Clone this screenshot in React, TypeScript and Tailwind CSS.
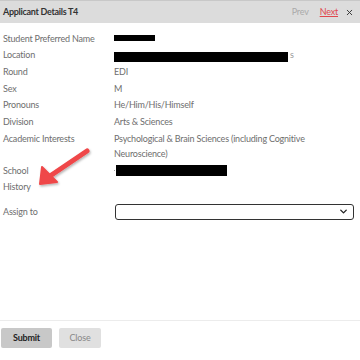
import { ChevronDown, X } from "lucide-react";

type Row = { label: string; value?: string; bar?: number; tail?: string };

const rows: Row[] = [
    { label: "Student Preferred Name", bar: 41 },
    { label: "Location", bar: 174, tail: "s" },
    { label: "Round", value: "EDI" },
    { label: "Sex", value: "M" },
    { label: "Pronouns", value: "He/Him/His/Himself" },
    { label: "Division", value: "Arts & Sciences" },
];

function Bar({ width, height }: { width: number; height: number }) {
    return <span className="inline-block bg-black" style={{ width, height }} />;
}

export default function App() {
    return (
        <div
            className="relative flex flex-col w-[360px] h-[360px] bg-white text-[#6e6e6e] text-[9px] tracking-[-0.2px] overflow-hidden"
            style={{ fontFamily: "'Source Sans Pro', Lato, 'Noto Sans', sans-serif" }}
        >
            <div className="flex items-center h-[23px] bg-[#dcdcdc] border-t border-[#c8c8c8] pl-[3px] pr-[6px]">
                <h2 className="font-bold text-[#333] text-[9px] tracking-[-0.3px]">Applicant Details T4</h2>
                <div className="flex items-center ml-auto text-[9px]">
                    <span className="text-[#aaa]">Prev</span>
                    <span className="ml-[11px] text-[#e0474c] underline">Next</span>
                    <X size={9} strokeWidth={2.5} className="ml-[7px] text-[#333]" />
                </div>
            </div>

            <div className="flex flex-col pt-[7px] pl-[3px]">
                {rows.map((r) => (
                    <div key={r.label} className="grid grid-cols-[111px_1fr] items-center h-[16.7px]">
                        <span>{r.label}</span>
                        <span className="flex items-end">
                            {r.bar ? (
                                <>
                                    <Bar width={r.bar} height={r.bar > 100 ? 10 : 6} />
                                    {r.tail && <span className="ml-[2px] text-[#999]">{r.tail}</span>}
                                </>
                            ) : (
                                r.value
                            )}
                        </span>
                    </div>
                ))}

                <div className="grid grid-cols-[111px_1fr] leading-[15px] pt-[1px] pr-[40px]">
                    <span>Academic Interests</span>
                    <span>Psychological &amp; Brain Sciences (including Cognitive Neuroscience)</span>
                </div>

                <div className="grid grid-cols-[111px_1fr] items-center h-[16.7px] mt-[1px]">
                    <span>School</span>
                    <span className="flex items-center">
                        <span className="w-[1px] h-[1px] bg-[#999] mr-[1px]" />
                        <Bar width={111} height={11} />
                    </span>
                </div>
                <div className="grid grid-cols-[111px_1fr] items-center h-[16.7px]">
                    <span>History</span>
                    <span />
                </div>

                <div className="grid grid-cols-[111px_1fr] items-center mt-[8px] pr-[6px]">
                    <span>Assign to</span>
                    <div className="flex items-center justify-end h-[16px] border border-[#333] rounded-[3px] px-[4px] ml-[1px]">
                        <ChevronDown size={11} strokeWidth={3} className="text-[#222]" />
                    </div>
                </div>
            </div>

            <svg className="absolute left-0 top-0" width="360" height="360" viewBox="0 0 360 360">
                <defs>
                    <filter id="sh" x="-20%" y="-20%" width="140%" height="140%">
                        <feDropShadow dx="1" dy="1.5" stdDeviation="1.2" floodColor="#000" floodOpacity="0.3" />
                    </filter>
                </defs>
                <g filter="url(#sh)" fill="#ef4748" stroke="#ef4748" strokeLinecap="round" strokeLinejoin="round">
                    <line x1="87" y1="151" x2="50" y2="176" strokeWidth="5" />
                    <polygon points="40,184 42,167 57,182" strokeWidth="2" />
                </g>
            </svg>

            <div className="flex-1" />

            <div className="flex items-center gap-[7px] border-t border-[#ececec] pt-[7px] pb-[12px] pl-[1px]">
                <button className="w-[51px] h-[20px] bg-[#c8c8c8] font-bold text-[#222] rounded-[2px]">Submit</button>
                <button className="w-[42px] h-[20px] bg-[#e0e0e0] text-[#888] rounded-[2px]">Close</button>
            </div>
        </div>
    );
}
